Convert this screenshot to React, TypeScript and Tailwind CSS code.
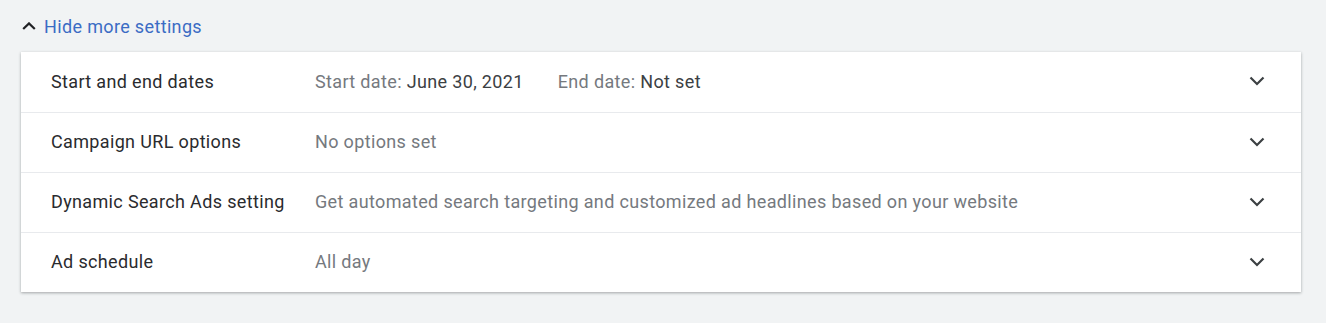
import React from "react";

type Row = {
  label: string;
  value: React.ReactNode;
};

const rows: Row[] = [
  {
    label: "Start and end dates",
    value: (
      <span className="flex gap-[34px]">
        <span>
          Start date: <span className="text-[#3c4043]">June 30, 2021</span>
        </span>
        <span>
          End date: <span className="text-[#3c4043]">Not set</span>
        </span>
      </span>
    ),
  },
  { label: "Campaign URL options", value: "No options set" },
  {
    label: "Dynamic Search Ads setting",
    value:
      "Get automated search targeting and customized ad headlines based on your website",
  },
  { label: "Ad schedule", value: "All day" },
];

const ChevronDown = () => (
  <svg width="16" height="10" viewBox="0 0 16 10" fill="none">
    <path d="M1.5 1.5L8 8l6.5-6.5" stroke="#3c4043" strokeWidth="2.2" />
  </svg>
);

const ChevronUp = () => (
  <svg width="14" height="8" viewBox="0 0 14 8" fill="none">
    <path d="M1.2 7L7 1.4 12.8 7" stroke="#202124" strokeWidth="2.2" />
  </svg>
);

export default function App() {
  return (
    <div
      className="bg-[#f1f3f4] h-[323px] pl-[21px] pr-[25px] pt-[13px]"
      style={{ fontFamily: "Roboto, 'Liberation Sans', sans-serif" }}
    >
      {/* toggle */}
      <div className="flex items-center gap-[8px] pl-[1px] h-[26px] text-[18px] tracking-[0.35px] text-[#3b6cc4] cursor-pointer">
        <ChevronUp />
        <span>Hide more settings</span>
      </div>

      {/* settings card */}
      <div className="mt-[13px] bg-white shadow-[0_1px_3px_rgba(60,64,67,0.3),0_1px_2px_rgba(60,64,67,0.15)]">
        {rows.map((row, i) => (
          <div
            key={row.label}
            className={
              "flex items-center h-[60px] pb-[2px] pl-[30px] pr-[36px] text-[18px] tracking-[0.35px] " +
              (i > 0 ? "border-t border-[#e8eaed]" : "")
            }
          >
            <div className="w-[264px] text-[#2a2b2e]">{row.label}</div>
            <div className="flex-1 text-[#75797e]">{row.value}</div>
            <ChevronDown />
          </div>
        ))}
      </div>
    </div>
  );
}
